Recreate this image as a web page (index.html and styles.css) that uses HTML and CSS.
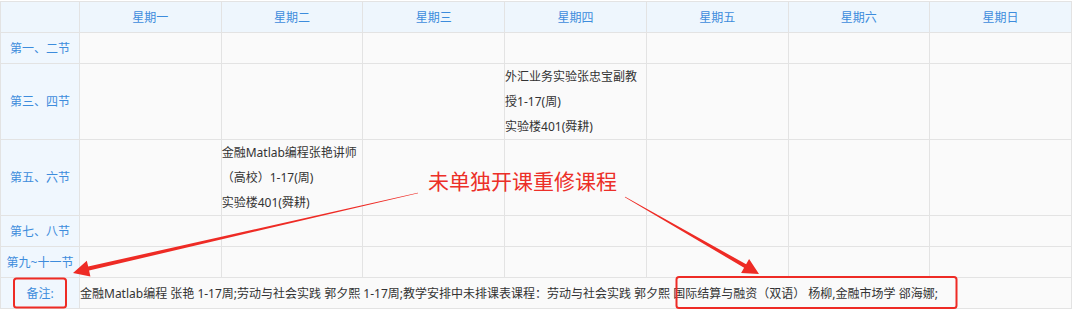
FILE: index.html
```html
<!DOCTYPE html>
<html lang="zh-CN">
<head>
<meta charset="utf-8">
<title>课表</title>
<link rel="stylesheet" href="styles.css">
</head>
<body>
<div class="page">
  <table class="timetable">
    <colgroup>
      <col class="col-label">
      <col class="col-day"><col class="col-day"><col class="col-day"><col class="col-day">
      <col class="col-day"><col class="col-day"><col class="col-day">
    </colgroup>
    <thead>
      <tr class="head-row">
        <th class="corner"></th>
        <th>星期一</th><th>星期二</th><th>星期三</th><th>星期四</th><th>星期五</th><th>星期六</th><th>星期日</th>
      </tr>
    </thead>
    <tbody>
      <tr>
        <th class="label">第一、二节</th>
        <td></td><td></td><td></td><td></td><td></td><td></td><td></td>
      </tr>
      <tr>
        <th class="label">第三、四节</th>
        <td></td><td></td><td></td>
        <td class="course">外汇业务实验张忠宝副教<br>授1-17(周)<br>实验楼401(舜耕)</td>
        <td></td><td></td><td></td>
      </tr>
      <tr>
        <th class="label">第五、六节</th>
        <td></td>
        <td class="course">金融Matlab编程张艳讲师<br>（高校）1-17(周)<br>实验楼401(舜耕)</td>
        <td></td><td></td><td></td><td></td><td></td>
      </tr>
      <tr>
        <th class="label">第七、八节</th>
        <td></td><td></td><td></td><td></td><td></td><td></td><td></td>
      </tr>
      <tr>
        <th class="label">第九~十一节</th>
        <td></td><td></td><td></td><td></td><td></td><td></td><td></td>
      </tr>
      <tr>
        <th class="label">备注:</th>
        <td class="notes" colspan="7">金融Matlab编程 张艳 1-17周;劳动与社会实践 郭夕熙 1-17周;教学安排中未排课表课程：劳动与社会实践 郭夕熙 国际结算与融资（双语） 杨柳,金融市场学 郤海娜;</td>
      </tr>
    </tbody>
  </table>

  <div class="callout">未单独开课重修课程</div>
  <svg class="marks" width="1072" height="316" viewBox="0 0 1072 316">
    <rect x="14" y="278.5" width="52" height="29" rx="2.5" fill="none" stroke="#ee2b25" stroke-width="2"/>
    <rect x="676.5" y="277" width="280" height="31" rx="2.5" fill="none" stroke="#ee2b25" stroke-width="2"/>
    <polygon fill="#ee2b25" points="417.9,192.7 88.2,266.5 86.8,260.8 73,273 90.4,276.4 89.1,270.5 418.1,193.3"/>
    <polygon fill="#ee2b25" points="625.2,196.7 746.1,264.3 749.1,259.1 759,274 741.1,272.9 744.1,267.7 624.8,197.3"/>
  </svg>
</div>
</body>
</html>
```

FILE: styles.css
```css
html, body {
  margin: 0;
  padding: 0;
  background: #ffffff;
}

body {
  font-family: "Noto Sans", "Noto Sans CJK SC", sans-serif;
  font-size: 12px;
  color: #333333;
}

.page {
  position: relative;
  width: 1072px;
  height: 316px;
  padding-top: 1px;
  box-sizing: border-box;
}

.timetable {
  border-collapse: collapse;
  table-layout: fixed;
  width: 1072px;
}

.col-label {
  width: 79px;
}

.timetable th,
.timetable td {
  border: 1px solid #e3e3e3;
  padding: 0;
  height: 30px;
  line-height: 25px;
  vertical-align: middle;
  font-weight: normal;
}

.timetable td {
  background: #fafafa;
}

.head-row th {
  background: #eef6fd;
  color: #3d8cdc;
  text-align: center;
}

.label {
  background: #f0f7fe;
  color: #3d8cdc;
  text-align: center;
  white-space: nowrap;
  overflow: visible;
}

.course {
  text-align: left;
  white-space: nowrap;
  color: #333333;
}

.notes {
  text-align: left;
  white-space: nowrap;
  color: #333333;
}

.callout {
  position: absolute;
  left: 428px;
  top: 167px;
  font-size: 21px;
  line-height: 28px;
  color: #ec2f28;
  white-space: nowrap;
}

.marks {
  position: absolute;
  left: 0;
  top: 0;
  pointer-events: none;
}
```
